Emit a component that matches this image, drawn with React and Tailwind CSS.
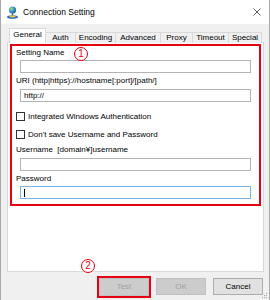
import React from 'react';

const tabs = [
  { label: 'General', w: 'w-[37px]' },
  { label: 'Auth', w: 'w-[31px]' },
  { label: 'Encoding', w: 'w-[41px]' },
  { label: 'Advanced', w: 'w-[46px]' },
  { label: 'Proxy', w: 'w-[33px]' },
  { label: 'Timeout', w: 'w-[37px]' },
  { label: 'Special', w: 'w-[34px]' },
];

function Badge({ n, className }) {
  return (
    <div
      className={`absolute w-[14px] h-[14px] rounded-full border-[1.5px] border-[#e60012] bg-white flex items-center justify-center text-[10px] leading-none text-[#e60012] ${className}`}
    >
      {n}
    </div>
  );
}

function Field({ value, focused }) {
  return (
    <div className="pl-[8px] pr-[8px]">
      <div
        className={`h-[13px] bg-white border flex items-center pl-[3px] text-[8px] ${
          focused ? 'border-[#7ab4e6]' : 'border-[#b4b4b4]'
        }`}
      >
        {value}
        {focused && <span className="w-px h-[8px] bg-black" />}
      </div>
    </div>
  );
}

function Check({ label, className }) {
  return (
    <div className={`flex items-center h-[9px] pl-[4px] ${className}`}>
      <span className="w-[9px] h-[9px] border border-[#333] bg-white" />
      <span className="ml-[3px] text-[8px]">{label}</span>
    </div>
  );
}

export default function App() {
  return (
    <div className="relative w-[270px] h-[300px] overflow-hidden bg-[#f0f0f0] border-x border-[#a9a9a9] font-['Liberation_Sans',Arial,sans-serif] text-black">
      {/* title bar */}
      <div className="h-[24px] bg-white flex items-center pl-[5px] pr-[8px]">
        <svg width="13" height="13" viewBox="0 0 13 13">
          <defs>
            <radialGradient id="g" cx="0.35" cy="0.35" r="0.7">
              <stop offset="0" stopColor="#9be37a" />
              <stop offset="0.6" stopColor="#2f8fd0" />
              <stop offset="1" stopColor="#1b5aa0" />
            </radialGradient>
          </defs>
          <circle cx="6.5" cy="4" r="3.6" fill="url(#g)" />
          <rect x="5.8" y="7" width="1.4" height="3" fill="#666" />
          <ellipse cx="6.5" cy="11" rx="5.5" ry="1.8" fill="#2b6cc4" />
          <ellipse cx="6.5" cy="10.6" rx="3.2" ry="1" fill="#f0c53c" />
        </svg>
        <span className="ml-[4px] text-[8.5px]">Connection Setting</span>
        <svg className="ml-auto" width="8" height="8" viewBox="0 0 8 8">
          <path d="M0.5 0.5L7.5 7.5M7.5 0.5L0.5 7.5" stroke="#333" strokeWidth="0.8" />
        </svg>
      </div>

      <div className="pt-[5px] pl-[6px] pr-[5px]">
        {/* tabs */}
        <div className="flex items-end h-[14px] pl-[2px] relative z-10">
          {tabs.map((t, i) =>
            i === 0 ? (
              <div
                key={t.label}
                className={`${t.w} h-[15px] bg-white border border-b-0 border-[#d9d9d9] flex items-center justify-center text-[8px] pb-[2px]`}
              >
                {t.label}
              </div>
            ) : (
              <div
                key={t.label}
                className={`${t.w} h-[11px] -ml-px bg-[#f0f0f0] border border-b-0 border-[#d9d9d9] flex items-center justify-center text-[8px]`}
              >
                {t.label}
              </div>
            )
          )}
        </div>

        {/* panel */}
        <div className="h-[230px] -mt-px bg-white border border-[#d9d9d9] pt-px px-[2px]">
          <div className="border-2 border-[#e60012] pb-[5px]">
            <div className="h-[14px] flex items-center pl-[4px] text-[8px]">Setting Name</div>
            <Field value="" />
            <div className="h-[16px] flex items-center pl-[4px] text-[8px]">
              URI (http|https)://hostname[:port]/[path/]
            </div>
            <Field value="http://" />
            <Check label="Integrated Windows Authentication" className="mt-[10px]" />
            <Check label="Don't save Username and Password" className="mt-[9px]" />
            <div className="h-[16px] mt-[3px] flex items-center pl-[4px] text-[8px]">
              Username&nbsp;&nbsp;[domain¥]username
            </div>
            <Field value="" />
            <div className="h-[15px] flex items-center pl-[4px] text-[8px]">Password</div>
            <Field value="" focused />
          </div>
        </div>

        {/* buttons */}
        <div className="flex items-start justify-end mt-[4px] pr-[1px]">
          <div className="border-2 border-[#e60012]">
            <div className="w-[50px] h-[18px] bg-[#cccccc] border border-[#bfbfbf] flex items-center justify-center text-[8px] text-[#a0a0a0]">
              Test
            </div>
          </div>
          <div className="ml-[5px] mt-[2px] w-[50px] h-[17px] bg-[#cccccc] border border-[#bfbfbf] flex items-center justify-center text-[8px] text-[#a0a0a0]">
            OK
          </div>
          <div className="ml-[7px] mt-[2px] w-[50px] h-[17px] bg-[#e1e1e1] border border-[#adadad] flex items-center justify-center text-[8px]">
            Cancel
          </div>
        </div>
      </div>

      {/* resize grip */}
      <svg className="absolute right-[1px] bottom-[1px]" width="6" height="6" viewBox="0 0 6 6">
        <rect x="4" y="0" width="1" height="1" fill="#a0a0a0" />
        <rect x="2" y="2" width="1" height="1" fill="#a0a0a0" />
        <rect x="4" y="2" width="1" height="1" fill="#a0a0a0" />
        <rect x="0" y="4" width="1" height="1" fill="#a0a0a0" />
        <rect x="2" y="4" width="1" height="1" fill="#a0a0a0" />
        <rect x="4" y="4" width="1" height="1" fill="#a0a0a0" />
      </svg>

      <Badge n="1" className="left-[73px] top-[47px]" />
      <Badge n="2" className="left-[80px] top-[259px]" />
    </div>
  );
}
